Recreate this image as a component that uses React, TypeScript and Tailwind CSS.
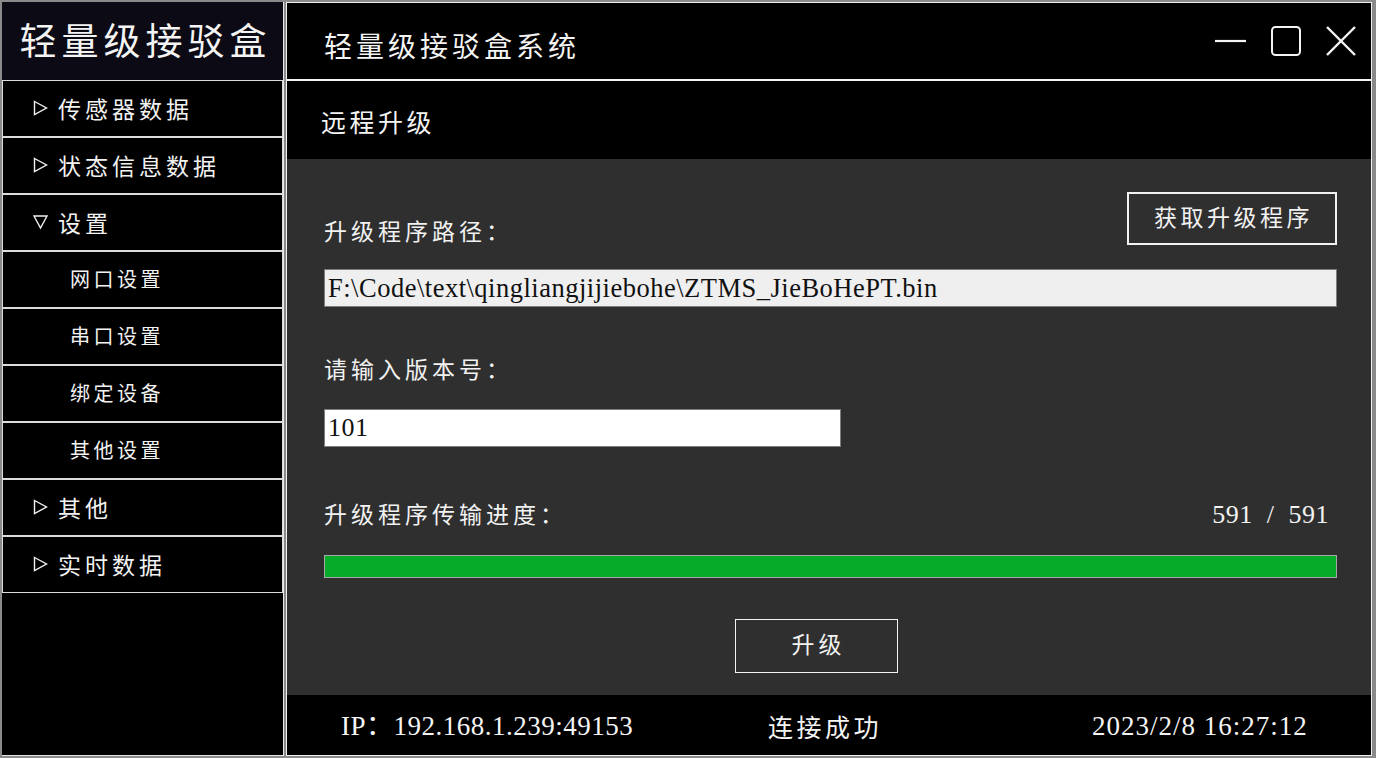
import React from "react";

const CJK = "font-['Noto_Sans_CJK_SC',sans-serif]";
const SERIF = "font-['Liberation_Serif','Noto_Sans_CJK_SC',serif]";

function TriRight() {
  return (
    <svg width="15" height="16" viewBox="0 0 15 16" className="shrink-0">
      <path d="M1.5 1.5 L13.5 8 L1.5 14.5 Z" fill="none" stroke="#f2f2f2" strokeWidth="1.4" strokeLinejoin="miter" />
    </svg>
  );
}

function TriDown() {
  return (
    <svg width="15" height="16" viewBox="0 0 15 16" className="shrink-0">
      <path d="M1 2 L14 2 L7.5 14 Z" fill="none" stroke="#f2f2f2" strokeWidth="1.4" strokeLinejoin="miter" />
    </svg>
  );
}

type NavItem = { label: string; kind: "closed" | "open" | "sub" };

const NAV: NavItem[] = [
  { label: "传感器数据", kind: "closed" },
  { label: "状态信息数据", kind: "closed" },
  { label: "设置", kind: "open" },
  { label: "网口设置", kind: "sub" },
  { label: "串口设置", kind: "sub" },
  { label: "绑定设备", kind: "sub" },
  { label: "其他设置", kind: "sub" },
  { label: "其他", kind: "closed" },
  { label: "实时数据", kind: "closed" },
];

function Sidebar() {
  return (
    <div className="flex h-full w-[282px] shrink-0 flex-col border-r border-b border-[#e8e8e8] bg-black">
      <div className="flex h-[78px] shrink-0 items-center justify-center bg-[#0c0a15] pb-[3px] pl-[6px]">
        <span className={`${CJK} text-[37px] leading-none tracking-[5px] text-[#f4f4f4]`}>轻量级接驳盒</span>
      </div>
      {NAV.map((item) => (
        <div
          key={item.label}
          className="flex h-[57px] w-[281px] shrink-0 items-center border border-[#dcdcdc] bg-black pb-[1px]"
        >
          {item.kind === "sub" ? (
            <span className={`${CJK} pl-[67px] text-[20px] leading-none tracking-[3.5px] text-[#f2f2f2]`}>
              {item.label}
            </span>
          ) : (
            <div className="flex items-center pl-[30px]">
              {item.kind === "open" ? <TriDown /> : <TriRight />}
              <span className={`${CJK} ml-[10px] text-[23px] leading-none tracking-[4px] text-[#f2f2f2]`}>
                {item.label}
              </span>
            </div>
          )}
        </div>
      ))}
    </div>
  );
}

function TitleBar() {
  return (
    <div className="flex h-[78px] shrink-0 items-center justify-between border-b-2 border-[#f2f2f2] bg-black pt-[7px] pl-[37px] pr-[15px]">
      <span className={`${CJK} text-[28px] leading-none tracking-[4px] text-[#f4f4f4]`}>轻量级接驳盒系统</span>
      <div className="flex items-center gap-[25px] self-stretch pb-[7px]">
        <svg width="31" height="30" viewBox="0 0 31 30">
          <line x1="0" y1="15" x2="31" y2="15" stroke="#f4f4f4" strokeWidth="2.2" />
        </svg>
        <svg width="30" height="30" viewBox="0 0 30 30">
          <rect x="1" y="1" width="28" height="28" rx="3.5" fill="none" stroke="#f4f4f4" strokeWidth="2" />
        </svg>
        <svg width="30" height="30" viewBox="0 0 30 30">
          <line x1="1" y1="1" x2="29" y2="29" stroke="#f4f4f4" strokeWidth="2.4" />
          <line x1="29" y1="1" x2="1" y2="29" stroke="#f4f4f4" strokeWidth="2.4" />
        </svg>
      </div>
    </div>
  );
}

function Content() {
  return (
    <div className="flex flex-1 flex-col bg-[#2f2f2f] pl-[37px] pr-[34px]">
      <div className="mt-[33px] flex h-[53px] justify-between">
        <div className={`${CJK} pt-[23px] text-[23px] leading-[30px] tracking-[4px] text-[#f2f2f2]`}>升级程序路径：</div>
        <div className="flex h-[53px] w-[210px] items-center justify-center border-2 border-[#f2f2f2] pb-[5px]">
          <span className={`${CJK} pl-[3px] text-[23px] leading-none tracking-[3.5px] text-[#f2f2f2]`}>获取升级程序</span>
        </div>
      </div>
      <div className="mt-[24px] flex h-[38px] items-center border border-[#7c7c7c] bg-[#efefef] pl-[3px]">
        <span className={`${SERIF} text-[26.5px] leading-none tracking-[0.5px] text-[#111]`}>
          F:\Code\text\qingliangjijiebohe\ZTMS_JieBoHePT.bin
        </span>
      </div>
      <div className={`${CJK} mt-[46px] text-[23px] leading-[30px] tracking-[4px] text-[#f2f2f2]`}>请输入版本号：</div>
      <div className="mt-[26px] flex h-[38px] w-[517px] items-center border border-[#7c7c7c] bg-white pl-[3px]">
        <span className={`${SERIF} text-[26px] leading-none tracking-[0.5px] text-[#111]`}>101</span>
      </div>
      <div className="mt-[51px] flex h-[30px] items-center justify-between">
        <span className={`${CJK} text-[23px] leading-[30px] tracking-[4px] text-[#f2f2f2]`}>升级程序传输进度：</span>
        <span className={`${SERIF} whitespace-pre pt-[3px] pr-[8px] text-[26px] leading-none tracking-[0.5px] text-[#f2f2f2]`}>
          591  /  591
        </span>
      </div>
      <div className="mt-[27px] h-[23px] border border-[#a8a8a8] bg-[#05ac29]" />
      <div className="ml-[411px] mt-[41px] flex h-[54px] w-[163px] items-center justify-center border border-[#f2f2f2] pb-[6px]">
        <span className={`${CJK} pl-[4px] text-[23px] leading-none tracking-[4px] text-[#f2f2f2]`}>升级</span>
      </div>
    </div>
  );
}

function Footer() {
  return (
    <div className="flex h-[60px] shrink-0 items-center bg-black pl-[54px] pt-[3px]">
      <div className={`${SERIF} w-[427px] text-[27px] leading-none tracking-[0.5px] text-[#f4f4f4]`}>IP：192.168.1.239:49153</div>
      <div className={`${CJK} w-[324px] text-[25px] leading-none tracking-[3.5px] text-[#f4f4f4]`}>连接成功</div>
      <div className={`${SERIF} text-[27px] leading-none tracking-[1px] text-[#f4f4f4]`}>2023/2/8 16:27:12</div>
    </div>
  );
}

export default function App() {
  return (
    <div className="flex h-[758px] w-[1376px] gap-[2px] overflow-hidden bg-[#8a8a8a] pt-[2px] pl-[2px] pr-[4px] pb-[2px]">
      <Sidebar />
      <div className="flex h-full w-[1086px] flex-col border border-[#f0f0f0] bg-black">
        <TitleBar />
        <div className="flex h-[78px] shrink-0 items-center bg-black pt-[2px] pl-[34px]">
          <span className={`${CJK} text-[25px] leading-none tracking-[3.5px] text-[#f4f4f4]`}>远程升级</span>
        </div>
        <Content />
        <Footer />
      </div>
    </div>
  );
}
